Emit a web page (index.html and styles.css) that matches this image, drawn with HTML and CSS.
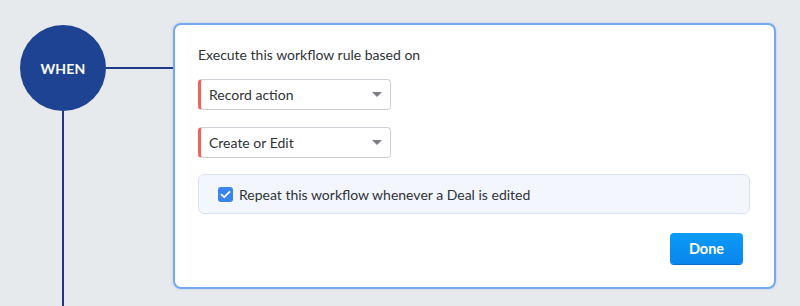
FILE: index.html
```html
<!DOCTYPE html>
<html>
<head>
<meta charset="utf-8">
<link rel="stylesheet" href="styles.css">
</head>
<body>
<div class="canvas">
  <div class="rail">
    <div class="when">WHEN</div>
    <div class="vline"></div>
  </div>
  <div class="hline"></div>
  <div class="card">
    <div class="title">Execute this workflow rule based on</div>
    <div class="select"><span>Record action</span><i class="caret"></i></div>
    <div class="select"><span>Create or Edit</span><i class="caret"></i></div>
    <label class="repeat">
      <span class="check"><svg width="11" height="9" viewBox="0 0 11 9"><path d="M1.5 4.6 L4.2 7.2 L9.5 1.8" fill="none" stroke="#fff" stroke-width="1.8" stroke-linecap="round" stroke-linejoin="round"/></svg></span>
      <span>Repeat this workflow whenever a Deal is edited</span>
    </label>
    <div class="actions"><button class="done">Done</button></div>
  </div>
</div>
</body>
</html>
```
FILE: styles.css
```css
html, body { margin: 0; padding: 0; }
body {
  width: 800px; height: 306px; overflow: hidden;
  background: #e7eaed;
  font-family: "Lato", "Noto Sans", sans-serif;
  color: #2f3338;
}
.canvas { display: flex; align-items: flex-start; padding-left: 20px; height: 306px; }
.rail { display: flex; flex-direction: column; align-items: center; width: 86px; margin-top: 25px; height: 281px; }
.when {
  width: 86px; height: 86px; border-radius: 50%;
  background: #1f4393; color: #fff;
  display: flex; align-items: center; justify-content: center;
  font-weight: 700; font-size: 14px; letter-spacing: 0.2px;
  flex: none;
}
.vline { width: 2px; flex: 1; background: #1f3a85; }
.hline { width: 67px; height: 2px; background: #1f3a85; margin-top: 67px; }
.card {
  margin-top: 23px;
  width: 603px; height: 266px; box-sizing: border-box;
  background: #fff; border: 2px solid #75a9ee; border-radius: 8px;
  padding: 20px 24px 0 23px;
  box-shadow: 0 0 3px rgba(90,150,235,0.35);
}
.title { font-size: 14px; line-height: 20px; color: #2f3338; margin-bottom: 14px; }
.select {
  width: 193px; height: 31px; box-sizing: border-box;
  border: 1px solid #cdd0d4; border-left: 3px solid #f2615a; border-radius: 4px;
  display: flex; align-items: center; justify-content: space-between;
  padding: 0 8px 0 8px; font-size: 14px; color: #2f3338;
  margin-bottom: 17px;
}
.caret { width: 0; height: 0; border-left: 5px solid transparent; border-right: 5px solid transparent; border-top: 5px solid #7b7f85; }
.repeat {
  display: flex; align-items: center; gap: 6px;
  width: 552px; height: 40px; box-sizing: border-box;
  background: #f3f6fd; border: 1px solid #d8e2f2; border-radius: 6px;
  padding-left: 19px; font-size: 14px; color: #2f3338;
  margin-top: -1px;
}
.check {
  width: 15px; height: 15px; border-radius: 3px; background: #3a84ef;
  display: flex; align-items: center; justify-content: center;
}
.actions { display: flex; justify-content: flex-end; padding-right: 7px; margin-top: 19px; }
.done {
  width: 73px; height: 31px; border: none; border-radius: 4px;
  background: linear-gradient(#0b9cf7, #0a84ec);
  box-shadow: 0 1px 0 #0a6fd0;
  color: #fff; font-family: "Lato", "Noto Sans", sans-serif; font-weight: 700; font-size: 14.5px;
}
```
